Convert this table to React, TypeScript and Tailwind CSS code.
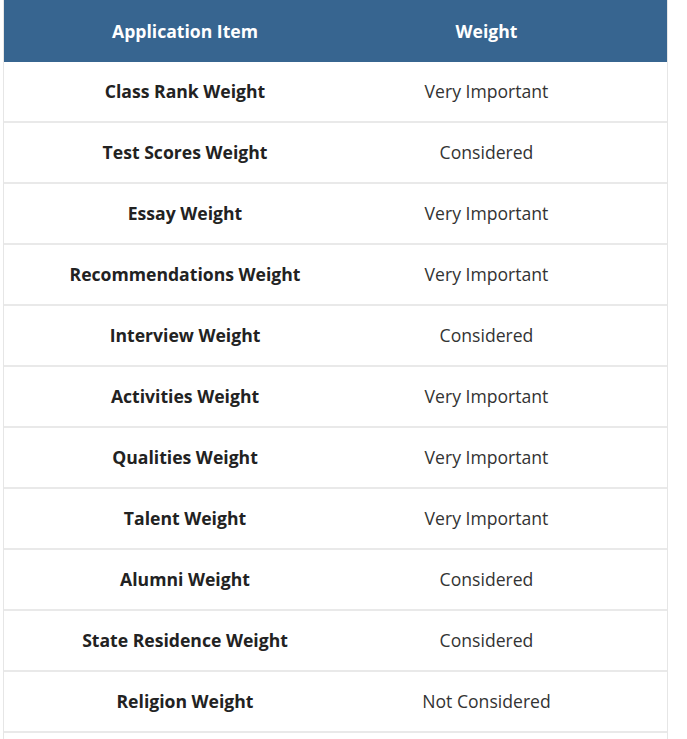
import React from "react";

const rows: [string, string][] = [
  ["Class Rank Weight", "Very Important"],
  ["Test Scores Weight", "Considered"],
  ["Essay Weight", "Very Important"],
  ["Recommendations Weight", "Very Important"],
  ["Interview Weight", "Considered"],
  ["Activities Weight", "Very Important"],
  ["Qualities Weight", "Very Important"],
  ["Talent Weight", "Very Important"],
  ["Alumni Weight", "Considered"],
  ["State Residence Weight", "Considered"],
  ["Religion Weight", "Not Considered"],
];

export default function App() {
  return (
    <div
      className="h-[739px] overflow-hidden bg-white pl-[3px] pr-[19px]"
      style={{ fontFamily: '"Open Sans", "Noto Sans", sans-serif' }}
    >
      <div className="border-x border-[#e6e6e6] pb-[10px]">
        {/* header */}
        <div className="flex h-[62px] items-center bg-[#376590] text-[17.6px] font-bold text-white">
          <div className="w-[362px] text-center">Application Item</div>
          <div className="flex-1 pr-[60px] text-center">Weight</div>
        </div>

        {rows.map(([item, weight]) => (
          <div
            key={item}
            className="flex h-[61px] items-center border-b-2 border-[#e9e9e9] text-[17.6px] text-[#222]"
          >
            <div className="w-[362px] text-center font-bold">{item}</div>
            <div className="flex-1 pr-[60px] text-center text-[#333]">{weight}</div>
          </div>
        ))}
      </div>
    </div>
  );
}
